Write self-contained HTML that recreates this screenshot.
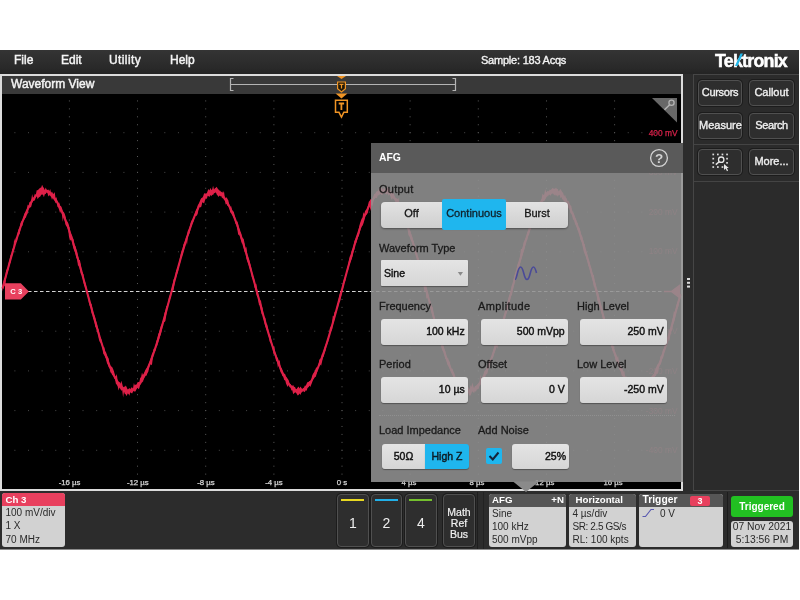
<!DOCTYPE html>
<html><head><meta charset="utf-8"><title>AFG</title>
<style>
*{box-sizing:border-box;margin:0;padding:0}
html,body{width:800px;height:600px;background:#fff;overflow:hidden}
body{font-family:"Liberation Sans",sans-serif;position:relative;color:#fff;filter:contrast(1)}
.a{position:absolute}
#app{left:0;top:50px;width:799px;height:499px;background:#2c2c2c;border-bottom:0;box-shadow:0 1px 0 #8c8c8c}
.menu{top:50px;left:0;width:799px;height:24px;background:linear-gradient(#343434,#2a2a2a 70%,#242424)}
.mi{top:52px;font-size:12px;line-height:16px;color:#f4f4f4;white-space:nowrap;-webkit-text-stroke:.45px #f4f4f4}
.wv{left:0;top:74px;width:683px;height:417px;border:2px solid #dcdcdc;background:#000}
.wvt{left:2px;top:76px;width:679px;height:18px;background:#393939}
.rp{left:693px;top:74px;width:106px;height:417px;border:1px solid #464646;border-right:none;background:#2b2b2b}
.btn{background:#2e2e2e;border:1px solid #505050;border-radius:4px;box-shadow:0 0 0 1px #1c1c1c;color:#f0f0f0;font-size:11px;-webkit-text-stroke:.35px #f0f0f0;text-align:center;white-space:nowrap}
.lbl{color:#1a1a1a;font-size:11px;-webkit-text-stroke:.3px #1a1a1a;line-height:14px;white-space:nowrap}
.inp{background:linear-gradient(#e4e4e4,#d6d6d6);border-radius:3px;color:#111;font-size:10.500px;-webkit-text-stroke:.42px #111;text-align:right;white-space:nowrap;box-shadow:0 1px 1px rgba(0,0,0,.35)}
.badge{background:#d2d2d2;border-radius:3px;color:#2a2a2a;font-size:10px;line-height:13.300px;overflow:hidden;white-space:nowrap}
.bh{height:12.500px;line-height:12.500px;color:#fff;font-weight:bold;font-size:9.700px;padding-left:3.500px;background:#565656}
.bb{padding-left:3.500px;padding-top:0}
.ax{top:477.500px;font-size:7.800px;-webkit-text-stroke:.25px #d8d8d8;color:#d8d8d8;line-height:10px;width:40px;text-align:center;white-space:nowrap}
</style></head><body>
<div class="a" id="app"></div>
<div class="a menu"></div>
<div class="a mi" style="left:14px">File</div>
<div class="a mi" style="left:61px">Edit</div>
<div class="a mi" style="left:109px;letter-spacing:.4px">Utility</div>
<div class="a mi" style="left:170px">Help</div>
<div class="a mi" style="left:481px;font-size:11px;letter-spacing:-.22px;-webkit-text-stroke:.35px #f4f4f4">Sample: 183 Acqs</div>
<div class="a" style="left:715px;top:49.500px;font-size:17.800px;line-height:22px;font-weight:bold;color:#fff;letter-spacing:-0.75px;-webkit-text-stroke:.5px #fff;white-space:nowrap">Tektronix</div>
<svg class="a" style="left:730px;top:50px" width="20" height="22"><path d="M10.5 3.5 L13 3.5 L7.5 16 L5 16Z" fill="#22b8ea"/></svg>

<div class="a wv"></div>
<div class="a wvt"></div>
<div class="a mi" style="left:11px;top:76px">Waveform View</div>

<svg class="a" style="left:0;top:0" width="800" height="600" viewBox="0 0 800 600">
 <g stroke="#484848" stroke-width="1" fill="none"><line x1="14.38" y1="132.7" x2="680" y2="132.7" stroke-dasharray="1 12.63"/><line x1="14.38" y1="172.4" x2="680" y2="172.4" stroke-dasharray="1 12.63"/><line x1="14.38" y1="212.1" x2="680" y2="212.1" stroke-dasharray="1 12.63"/><line x1="14.38" y1="251.8" x2="680" y2="251.8" stroke-dasharray="1 12.63"/><line x1="14.38" y1="291.5" x2="680" y2="291.5" stroke-dasharray="1 12.63"/><line x1="14.38" y1="331.2" x2="680" y2="331.2" stroke-dasharray="1 12.63"/><line x1="14.38" y1="370.9" x2="680" y2="370.9" stroke-dasharray="1 12.63"/><line x1="14.38" y1="410.6" x2="680" y2="410.6" stroke-dasharray="1 12.63"/><line x1="14.38" y1="450.3" x2="680" y2="450.3" stroke-dasharray="1 12.63"/></g><g stroke="#5a5a5a" stroke-width="1" fill="none"><line x1="69.4" y1="100.44" x2="69.4" y2="488" stroke-dasharray="1 6.94"/><line x1="137.5" y1="100.44" x2="137.5" y2="488" stroke-dasharray="1 6.94"/><line x1="205.7" y1="100.44" x2="205.7" y2="488" stroke-dasharray="1 6.94"/><line x1="273.9" y1="100.44" x2="273.9" y2="488" stroke-dasharray="1 6.94"/><line x1="342.0" y1="100.44" x2="342.0" y2="488" stroke-dasharray="1 6.94"/><line x1="410.1" y1="100.44" x2="410.1" y2="488" stroke-dasharray="1 6.94"/><line x1="478.3" y1="100.44" x2="478.3" y2="488" stroke-dasharray="1 6.94"/><line x1="546.5" y1="100.44" x2="546.5" y2="488" stroke-dasharray="1 6.94"/><line x1="614.6" y1="100.44" x2="614.6" y2="488" stroke-dasharray="1 6.94"/></g>
 <line x1="28" y1="291.5" x2="681" y2="291.5" stroke="#d4d4d4" stroke-width="1.200" stroke-dasharray="3.500 2.500"/>
 <g fill="none" stroke="#de2048" stroke-linejoin="round"><path d="M2.5 288.4 L4.5 281.0 L6.5 273.7 L8.5 266.5 L10.5 259.4 L12.5 252.5 L14.5 245.7 L16.5 239.3 L18.5 233.1 L20.5 227.2 L22.5 221.7 L24.5 216.6 L26.5 211.8 L28.5 207.5 L30.5 203.7 L32.5 200.3 L34.5 197.5 L36.5 195.1 L38.5 193.3 L40.5 192.0 L42.5 191.2 L44.5 191.0 L46.5 191.3 L48.5 192.2 L50.5 193.6 L52.5 195.6 L54.5 198.1 L56.5 201.0 L58.5 204.5 L60.5 208.5 L62.5 212.9 L64.5 217.7 L66.5 222.9 L68.5 228.5 L70.5 234.5 L72.5 240.7 L74.5 247.2 L76.5 254.0 L78.5 261.0 L80.5 268.1 L82.5 275.3 L84.5 282.7 L86.5 290.1 L88.5 297.5 L90.5 304.8 L92.5 312.1 L94.5 319.3 L96.5 326.3 L98.5 333.1 L100.5 339.7 L102.5 346.0 L104.5 352.0 L106.5 357.7 L108.5 363.0 L110.5 368.0 L112.5 372.5 L114.5 376.5 L116.5 380.1 L118.5 383.2 L120.5 385.8 L122.5 387.9 L124.5 389.5 L126.5 390.5 L128.5 391.0 L130.5 390.9 L132.5 390.3 L134.5 389.1 L136.5 387.4 L138.5 385.2 L140.5 382.4 L142.5 379.2 L144.5 375.5 L146.5 371.3 L148.5 366.7 L150.5 361.6 L152.5 356.2 L154.5 350.4 L156.5 344.3 L158.5 337.9 L160.5 331.2 L162.5 324.4 L164.5 317.3 L166.5 310.1 L168.5 302.8 L170.5 295.4 L172.5 288.0 L174.5 280.7 L176.5 273.3 L178.5 266.1 L180.5 259.0 L182.5 252.1 L184.5 245.4 L186.5 239.0 L188.5 232.8 L190.5 226.9 L192.5 221.4 L194.5 216.3 L196.5 211.6 L198.5 207.3 L200.5 203.5 L202.5 200.2 L204.5 197.3 L206.5 195.0 L208.5 193.2 L210.5 191.9 L212.5 191.2 L214.5 191.0 L216.5 191.4 L218.5 192.3 L220.5 193.7 L222.5 195.7 L224.5 198.2 L226.5 201.2 L228.5 204.7 L230.5 208.7 L232.5 213.1 L234.5 217.9 L236.5 223.2 L238.5 228.8 L240.5 234.8 L242.5 241.0 L244.5 247.6 L246.5 254.3 L248.5 261.3 L250.5 268.5 L252.5 275.7 L254.5 283.1 L256.5 290.4 L258.5 297.8 L260.5 305.2 L262.5 312.5 L264.5 319.6 L266.5 326.6 L268.5 333.4 L270.5 340.0 L272.5 346.3 L274.5 352.3 L276.5 358.0 L278.5 363.3 L280.5 368.2 L282.5 372.7 L284.5 376.7 L286.5 380.3 L288.5 383.4 L290.5 386.0 L292.5 388.0 L294.5 389.5 L296.5 390.5 L298.5 391.0 L300.5 390.9 L302.5 390.2 L304.5 389.0 L306.5 387.3 L308.5 385.0 L310.5 382.3 L312.5 379.0 L314.5 375.3 L316.5 371.1 L318.5 366.4 L320.5 361.4 L322.5 355.9 L324.5 350.1 L326.5 344.0 L328.5 337.6 L330.5 330.9 L332.5 324.0 L334.5 317.0 L336.5 309.7 L338.5 302.4 L340.5 295.1 L342.5 287.7 L344.5 280.3 L346.5 273.0 L348.5 265.8 L350.5 258.7 L352.5 251.8 L354.5 245.1 L356.5 238.6 L358.5 232.5 L360.5 226.7 L362.5 221.2 L364.5 216.1 L366.5 211.4 L368.5 207.1 L370.5 203.3 L372.5 200.0 L374.5 197.2 L376.5 194.9 L378.5 193.1 L380.5 191.9 L382.5 191.2 L384.5 191.0 L386.5 191.4 L388.5 192.3 L390.5 193.8 L392.5 195.8 L394.5 198.3 L396.5 201.4 L398.5 204.9 L400.5 208.9 L402.5 213.3 L404.5 218.2 L406.5 223.5 L408.5 229.1 L410.5 235.1 L412.5 241.3 L414.5 247.9 L416.5 254.7 L418.5 261.7 L420.5 268.8 L422.5 276.1 L424.5 283.4 L426.5 290.8 L428.5 298.2 L430.5 305.6 L432.5 312.8 L434.5 320.0 L436.5 327.0 L438.5 333.8 L440.5 340.3 L442.5 346.6 L444.5 352.6 L446.5 358.3 L448.5 363.5 L450.5 368.4 L452.5 372.9 L454.5 376.9 L456.5 380.5 L458.5 383.5 L460.5 386.1 L462.5 388.1 L464.5 389.6 L466.5 390.6 L468.5 391.0 L470.5 390.9 L472.5 390.2 L474.5 389.0 L476.5 387.2 L478.5 384.9 L480.5 382.1 L482.5 378.8 L484.5 375.1 L486.5 370.8 L488.5 366.2 L490.5 361.1 L492.5 355.6 L494.5 349.8 L496.5 343.7 L498.5 337.2 L500.5 330.6 L502.5 323.7 L504.5 316.6 L506.5 309.4 L508.5 302.1 L510.5 294.7 L512.5 287.3 L514.5 279.9 L516.5 272.6 L518.5 265.4 L520.5 258.3 L522.5 251.4 L524.5 244.8 L526.5 238.3 L528.5 232.2 L530.5 226.4 L532.5 220.9 L534.5 215.8 L536.5 211.2 L538.5 206.9 L540.5 203.2 L542.5 199.9 L544.5 197.1 L546.5 194.8 L548.5 193.0 L550.5 191.8 L552.5 191.1 L554.5 191.0 L556.5 191.4 L558.5 192.4 L560.5 193.9 L562.5 195.9 L564.5 198.5 L566.5 201.5 L568.5 205.1 L570.5 209.1 L572.5 213.6 L574.5 218.5 L576.5 223.7 L578.5 229.4 L580.5 235.4 L582.5 241.7 L584.5 248.2 L586.5 255.0 L588.5 262.0 L590.5 269.2 L592.5 276.4 L594.5 283.8 L596.5 291.2 L598.5 298.6 L600.5 305.9 L602.5 313.2 L604.5 320.3 L606.5 327.3 L608.5 334.1 L610.5 340.7 L612.5 346.9 L614.5 352.9 L616.5 358.5 L618.5 363.8 L620.5 368.7 L622.5 373.1 L624.5 377.1 L626.5 380.6 L628.5 383.7 L630.5 386.2 L632.5 388.2 L634.5 389.7 L636.5 390.6 L638.5 391.0 L640.5 390.8 L642.5 390.1 L644.5 388.9 L646.5 387.1 L648.5 384.8 L650.5 382.0 L652.5 378.7 L654.5 374.9 L656.5 370.6 L658.5 365.9 L660.5 360.8 L662.5 355.3 L664.5 349.5 L666.5 343.4 L668.5 336.9 L670.5 330.2 L672.5 323.3 L674.5 316.2 L676.5 309.0 L678.5 301.7 L680.5 294.3" stroke-width="2.100"/><path d="M2.5 285.8 L3.4 282.3 L4.3 278.4 L5.2 277.3 L6.1 270.5 L7.0 269.0 L7.9 267.7 L8.8 262.5 L9.7 259.6 L10.6 254.9 L11.5 253.9 L12.4 248.6 L13.3 248.9 L14.2 238.6 L15.1 241.9 L16.0 237.0 L16.9 237.0 L17.8 232.6 L18.7 229.1 L19.6 227.9 L20.5 222.9 L21.4 221.3 L22.3 220.4 L23.2 218.8 L24.1 214.4 L25.0 212.6 L25.9 211.8 L26.8 209.6 L27.7 204.6 L28.6 206.1 L29.5 201.9 L30.4 201.9 L31.3 199.3 L32.2 194.0 L33.1 198.4 L34.0 196.8 L34.9 193.5 L35.8 194.9 L36.7 190.2 L37.6 190.3 L38.5 189.5 L39.4 188.6 L40.3 187.7 L41.2 187.4 L42.1 184.8 L43.0 186.8 L43.9 187.9 L44.8 190.1 L45.7 187.5 L46.6 189.5 L47.5 190.1 L48.4 189.6 L49.3 191.1 L50.2 189.1 L51.1 192.8 L52.0 191.4 L52.9 193.4 L53.8 193.8 L54.7 192.0 L55.6 198.7 L56.5 197.1 L57.4 201.7 L58.3 203.2 L59.2 202.4 L60.1 206.0 L61.0 205.9 L61.9 207.9 L62.8 211.2 L63.7 212.0 L64.6 213.5 L65.5 216.3 L66.4 221.0 L67.3 221.4 L68.2 222.9 L69.1 225.8 L70.0 229.9 L70.9 234.6 L71.8 234.5 L72.7 237.7 L73.6 239.3 L74.5 245.3 L75.4 246.1 L76.3 249.1 L77.2 251.7 L78.1 256.6 L79.0 259.9 L79.9 260.1 L80.8 264.5 L81.7 271.1 L82.6 273.0 L83.5 274.5 L84.4 280.6 L85.3 282.4 L86.2 286.1 L87.1 289.7 L88.0 294.2 L88.9 296.0 L89.8 300.5 L90.7 303.5 L91.6 304.0 L92.5 308.4 L93.4 312.9 L94.3 315.0 L95.2 317.3 L96.1 321.1 L97.0 323.8 L97.9 328.0 L98.8 329.9 L99.7 336.0 L100.6 337.9 L101.5 339.7 L102.4 344.2 L103.3 346.9 L104.2 347.1 L105.1 351.4 L106.0 352.3 L106.9 354.9 L107.8 356.9 L108.7 358.6 L109.6 365.0 L110.5 366.2 L111.4 366.6 L112.3 367.2 L113.2 369.2 L114.1 371.8 L115.0 376.3 L115.9 376.3 L116.8 374.0 L117.7 381.1 L118.6 381.9 L119.5 382.1 L120.4 383.8 L121.3 380.8 L122.2 383.8 L123.1 387.4 L124.0 386.6 L124.9 386.8 L125.8 385.5 L126.7 387.3 L127.6 389.5 L128.5 389.1 L129.4 388.1 L130.3 389.2 L131.2 387.4 L132.1 387.4 L133.0 388.5 L133.9 382.9 L134.8 385.6 L135.7 384.6 L136.6 384.6 L137.5 382.2 L138.4 382.0 L139.3 382.3 L140.2 378.1 L141.1 377.0 L142.0 372.6 L142.9 374.9 L143.8 373.4 L144.7 371.5 L145.6 369.5 L146.5 368.2 L147.4 366.7 L148.3 364.7 L149.2 362.7 L150.1 360.3 L151.0 357.3 L151.9 354.0 L152.8 352.4 L153.7 348.7 L154.6 349.0 L155.5 346.3 L156.4 341.2 L157.3 338.9 L158.2 334.2 L159.1 332.2 L160.0 328.8 L160.9 325.8 L161.8 323.9 L162.7 321.2 L163.6 318.2 L164.5 312.9 L165.4 310.7 L166.3 305.9 L167.2 305.9 L168.1 302.6 L169.0 297.1 L169.9 294.9 L170.8 292.2 L171.7 289.3 L172.6 285.3 L173.5 279.6 L174.4 278.7 L175.3 276.3 L176.2 270.2 L177.1 269.3 L178.0 267.1 L178.9 263.6 L179.8 258.8 L180.7 254.1 L181.6 250.7 L182.5 249.1 L183.4 244.6 L184.3 242.4 L185.2 240.7 L186.1 236.8 L187.0 235.6 L187.9 230.6 L188.8 229.6 L189.7 226.9 L190.6 222.9 L191.5 220.5 L192.4 220.3 L193.3 217.8 L194.2 215.9 L195.1 212.4 L196.0 209.9 L196.9 208.4 L197.8 205.2 L198.7 203.7 L199.6 201.8 L200.5 199.6 L201.4 198.1 L202.3 197.7 L203.2 196.3 L204.1 193.3 L205.0 193.6 L205.9 193.4 L206.8 193.4 L207.7 190.8 L208.6 189.0 L209.5 190.5 L210.4 187.8 L211.3 190.0 L212.2 189.2 L213.1 185.8 L214.0 189.6 L214.9 188.2 L215.8 187.8 L216.7 186.8 L217.6 188.5 L218.5 189.5 L219.4 190.4 L220.3 190.7 L221.2 192.3 L222.1 191.5 L223.0 193.1 L223.9 191.0 L224.8 196.9 L225.7 198.9 L226.6 197.1 L227.5 199.1 L228.4 200.6 L229.3 205.4 L230.2 207.0 L231.1 206.1 L232.0 209.9 L232.9 211.3 L233.8 211.8 L234.7 215.8 L235.6 219.2 L236.5 222.2 L237.4 221.3 L238.3 224.6 L239.2 228.8 L240.1 231.8 L241.0 232.9 L241.9 237.1 L242.8 238.6 L243.7 238.7 L244.6 243.7 L245.5 249.1 L246.4 246.7 L247.3 254.8 L248.2 257.2 L249.1 259.5 L250.0 263.1 L250.9 266.0 L251.8 270.6 L252.7 274.7 L253.6 276.9 L254.5 280.0 L255.4 285.5 L256.3 283.6 L257.2 290.1 L258.1 294.3 L259.0 296.8 L259.9 301.5 L260.8 299.4 L261.7 304.9 L262.6 308.1 L263.5 315.1 L264.4 316.9 L265.3 317.7 L266.2 323.8 L267.1 324.2 L268.0 328.5 L268.9 333.7 L269.8 334.6 L270.7 336.5 L271.6 341.3 L272.5 344.7 L273.4 346.5 L274.3 346.5 L275.2 352.4 L276.1 354.5 L277.0 357.1 L277.9 357.9 L278.8 361.7 L279.7 359.7 L280.6 367.5 L281.5 368.0 L282.4 370.6 L283.3 372.7 L284.2 373.8 L285.1 374.1 L286.0 376.4 L286.9 377.5 L287.8 378.9 L288.7 380.3 L289.6 383.8 L290.5 384.0 L291.4 385.5 L292.3 385.7 L293.2 385.0 L294.1 387.0 L295.0 386.7 L295.9 389.4 L296.8 388.8 L297.7 387.6 L298.6 386.4 L299.5 388.5 L300.4 386.6 L301.3 387.8 L302.2 389.0 L303.1 388.2 L304.0 387.6 L304.9 385.4 L305.8 385.8 L306.7 383.4 L307.6 382.0 L308.5 382.0 L309.4 380.9 L310.3 381.1 L311.2 380.0 L312.1 375.8 L313.0 373.8 L313.9 372.5 L314.8 371.0 L315.7 368.6 L316.6 367.2 L317.5 367.5 L318.4 365.1 L319.3 359.8 L320.2 358.8 L321.1 358.8 L322.0 353.6 L322.9 353.9 L323.8 350.1 L324.7 347.1 L325.6 344.4 L326.5 342.6 L327.4 339.3 L328.3 337.3 L329.2 333.4 L330.1 326.2 L331.0 328.1 L331.9 324.5 L332.8 315.8 L333.7 316.5 L334.6 311.8 L335.5 311.9 L336.4 309.0 L337.3 304.0 L338.2 302.7 L339.1 296.5 L340.0 293.0 L340.9 291.2 L341.8 289.4 L342.7 284.7 L343.6 280.3 L344.5 278.2 L345.4 275.3 L346.3 272.2 L347.2 267.9 L348.1 265.1 L349.0 259.7 L349.9 256.0 L350.8 255.2 L351.7 251.0 L352.6 249.2 L353.5 246.1 L354.4 241.1 L355.3 239.4 L356.2 237.0 L357.1 235.0 L358.0 233.1 L358.9 228.1 L359.8 223.9 L360.7 221.3 L361.6 218.8 L362.5 217.8 L363.4 211.9 L364.3 214.8 L365.2 210.1 L366.1 211.2 L367.0 208.5 L367.9 205.4 L368.8 201.7 L369.7 200.7 L370.6 199.0 L371.5 200.0 L372.4 198.6 L373.3 196.8 L374.2 194.0 L375.1 193.8 L376.0 192.2 L376.9 190.9 L377.8 191.2 L378.7 188.9 L379.6 187.8 L380.5 188.8 L381.4 187.3 L382.3 188.9 L383.2 190.0 L384.1 186.4 L385.0 189.3 L385.9 189.4 L386.8 187.3 L387.7 187.5 L388.6 188.7 L389.5 188.4 L390.4 191.5 L391.3 191.3 L392.2 193.1 L393.1 191.7 L394.0 194.2 L394.9 196.6 L395.8 199.1 L396.7 197.9 L397.6 199.3 L398.5 197.8 L399.4 203.7 L400.3 205.6 L401.2 209.2 L402.1 208.5 L403.0 211.5 L403.9 212.5 L404.8 216.5 L405.7 218.9 L406.6 220.0 L407.5 225.3 L408.4 222.7 L409.3 230.2 L410.2 230.7 L411.1 234.1 L412.0 236.0 L412.9 239.9 L413.8 241.5 L414.7 246.2 L415.6 249.5 L416.5 251.9 L417.4 257.0 L418.3 257.8 L419.2 261.0 L420.1 263.6 L421.0 268.7 L421.9 271.5 L422.8 273.1 L423.7 272.7 L424.6 280.8 L425.5 279.6 L426.4 286.9 L427.3 291.2 L428.2 294.6 L429.1 299.3 L430.0 300.7 L430.9 302.4 L431.8 307.8 L432.7 306.5 L433.6 313.3 L434.5 317.6 L435.4 321.7 L436.3 324.8 L437.2 327.0 L438.1 329.3 L439.0 331.8 L439.9 331.3 L440.8 337.6 L441.7 339.4 L442.6 345.2 L443.5 345.5 L444.4 349.3 L445.3 351.1 L446.2 355.8 L447.1 358.6 L448.0 357.8 L448.9 360.9 L449.8 361.8 L450.7 366.9 L451.6 369.1 L452.5 368.6 L453.4 371.5 L454.3 373.1 L455.2 377.2 L456.1 378.1 L457.0 376.7 L457.9 380.9 L458.8 380.5 L459.7 382.1 L460.6 381.9 L461.5 384.1 L462.4 381.0 L463.3 385.9 L464.2 385.8 L465.1 386.9 L466.0 388.4 L466.9 386.0 L467.8 386.4 L468.7 387.4 L469.6 389.8 L470.5 385.0 L471.4 387.1 L472.3 382.4 L473.2 385.7 L474.1 388.4 L475.0 385.7 L475.9 386.0 L476.8 385.1 L477.7 384.1 L478.6 383.0 L479.5 381.6 L480.4 374.5 L481.3 379.2 L482.2 377.1 L483.1 376.4 L484.0 372.1 L484.9 370.5 L485.8 370.0 L486.7 368.8 L487.6 366.2 L488.5 361.6 L489.4 359.6 L490.3 359.3 L491.2 358.1 L492.1 355.2 L493.0 351.1 L493.9 348.0 L494.8 344.4 L495.7 343.1 L496.6 340.7 L497.5 338.9 L498.4 335.2 L499.3 328.7 L500.2 328.8 L501.1 325.4 L502.0 323.1 L502.9 320.0 L503.8 316.1 L504.7 314.1 L505.6 311.2 L506.5 307.9 L507.4 304.7 L508.3 299.3 L509.2 295.0 L510.1 294.3 L511.0 291.7 L511.9 284.8 L512.8 284.5 L513.7 278.5 L514.6 275.0 L515.5 272.1 L516.4 271.3 L517.3 265.2 L518.2 262.4 L519.1 261.2 L520.0 257.9 L520.9 248.9 L521.8 249.1 L522.7 247.2 L523.6 242.3 L524.5 240.8 L525.4 238.5 L526.3 238.1 L527.2 232.7 L528.1 231.3 L529.0 227.2 L529.9 223.6 L530.8 220.9 L531.7 216.1 L532.6 218.0 L533.5 215.2 L534.4 213.9 L535.3 211.5 L536.2 207.2 L537.1 206.0 L538.0 203.5 L538.9 203.2 L539.8 201.4 L540.7 200.7 L541.6 198.7 L542.5 193.5 L543.4 195.0 L544.3 194.2 L545.2 189.1 L546.1 192.5 L547.0 191.6 L547.9 190.8 L548.8 191.5 L549.7 189.4 L550.6 189.9 L551.5 189.2 L552.4 187.9 L553.3 188.4 L554.2 188.7 L555.1 188.7 L556.0 187.6 L556.9 189.0 L557.8 189.0 L558.7 191.7 L559.6 189.9 L560.5 189.1 L561.4 190.6 L562.3 191.9 L563.2 193.1 L564.1 196.6 L565.0 194.6 L565.9 197.8 L566.8 198.6 L567.7 202.2 L568.6 200.5 L569.5 203.2 L570.4 205.3 L571.3 206.0 L572.2 211.5 L573.1 213.2 L574.0 213.4 L574.9 218.6 L575.8 218.2 L576.7 222.6 L577.6 222.8 L578.5 227.7 L579.4 227.4 L580.3 230.7 L581.2 235.3 L582.1 236.1 L583.0 239.6 L583.9 243.3 L584.8 244.5 L585.7 251.4 L586.6 251.9 L587.5 256.5 L588.4 259.9 L589.3 261.7 L590.2 265.4 L591.1 267.5 L592.0 271.8 L592.9 275.2 L593.8 274.4 L594.7 281.3 L595.6 283.7 L596.5 288.6 L597.4 289.7 L598.3 293.2 L599.2 296.9 L600.1 303.6 L601.0 306.5 L601.9 307.2 L602.8 311.6 L603.7 314.9 L604.6 317.4 L605.5 322.2 L606.4 322.3 L607.3 328.2 L608.2 332.1 L609.1 334.5 L610.0 334.4 L610.9 340.4 L611.8 343.8 L612.7 345.7 L613.6 345.6 L614.5 349.4 L615.4 353.5 L616.3 354.5 L617.2 357.7 L618.1 355.4 L619.0 362.9 L619.9 365.7 L620.8 366.3 L621.7 368.2 L622.6 369.1 L623.5 371.5 L624.4 371.3 L625.3 377.4 L626.2 375.7 L627.1 380.0 L628.0 381.5 L628.9 382.8 L629.8 382.7 L630.7 384.3 L631.6 385.0 L632.5 385.9 L633.4 384.5 L634.3 385.7 L635.2 388.5 L636.1 389.2 L637.0 388.5 L637.9 387.8 L638.8 387.6 L639.7 387.9 L640.6 388.9 L641.5 388.0 L642.4 387.9 L643.3 388.1 L644.2 388.3 L645.1 385.1 L646.0 384.9 L646.9 384.2 L647.8 381.9 L648.7 380.6 L649.6 381.9 L650.5 378.3 L651.4 376.6 L652.3 375.5 L653.2 373.9 L654.1 374.6 L655.0 369.7 L655.9 368.2 L656.8 365.7 L657.7 364.0 L658.6 363.8 L659.5 362.4 L660.4 356.3 L661.3 355.9 L662.2 353.5 L663.1 348.8 L664.0 349.6 L664.9 344.4 L665.8 337.0 L666.7 341.4 L667.6 338.8 L668.5 333.7 L669.4 332.6 L670.3 328.2 L671.2 326.9 L672.1 320.3 L673.0 317.0 L673.9 311.0 L674.8 312.2 L675.7 308.9 L676.6 304.8 L677.5 301.7 L678.4 300.6 L679.3 296.5 L680.2 292.2 L680.2 296.8 L679.3 301.0 L678.4 306.2 L677.5 308.0 L676.6 310.8 L675.7 314.0 L674.8 319.8 L673.9 322.4 L673.0 324.8 L672.1 330.6 L671.2 331.0 L670.3 335.3 L669.4 341.3 L668.5 337.9 L667.6 343.3 L666.7 344.1 L665.8 347.2 L664.9 350.9 L664.0 352.4 L663.1 358.1 L662.2 358.6 L661.3 362.7 L660.4 365.1 L659.5 364.7 L658.6 368.9 L657.7 374.1 L656.8 373.4 L655.9 376.3 L655.0 376.0 L654.1 378.6 L653.2 382.7 L652.3 382.0 L651.4 381.7 L650.5 385.1 L649.6 384.2 L648.7 389.2 L647.8 388.3 L646.9 388.8 L646.0 391.3 L645.1 389.5 L644.2 391.2 L643.3 394.2 L642.4 393.8 L641.5 394.8 L640.6 392.9 L639.7 395.7 L638.8 395.6 L637.9 395.3 L637.0 394.0 L636.1 395.2 L635.2 392.4 L634.3 393.5 L633.4 389.9 L632.5 391.8 L631.6 390.3 L630.7 387.2 L629.8 386.3 L628.9 387.3 L628.0 384.4 L627.1 382.8 L626.2 381.1 L625.3 379.6 L624.4 377.9 L623.5 376.2 L622.6 376.6 L621.7 375.6 L620.8 371.1 L619.9 370.1 L619.0 366.5 L618.1 363.8 L617.2 361.5 L616.3 361.3 L615.4 359.7 L614.5 354.0 L613.6 352.0 L612.7 351.2 L611.8 347.8 L610.9 345.3 L610.0 341.1 L609.1 337.0 L608.2 334.0 L607.3 334.1 L606.4 330.0 L605.5 324.9 L604.6 321.6 L603.7 320.5 L602.8 318.7 L601.9 314.2 L601.0 310.8 L600.1 305.9 L599.2 308.5 L598.3 300.8 L597.4 301.2 L596.5 293.6 L595.6 291.4 L594.7 286.5 L593.8 286.8 L592.9 280.8 L592.0 277.1 L591.1 274.6 L590.2 270.9 L589.3 266.7 L588.4 266.1 L587.5 261.5 L586.6 259.0 L585.7 255.9 L584.8 254.2 L583.9 251.9 L583.0 248.3 L582.1 242.1 L581.2 241.2 L580.3 239.2 L579.4 234.2 L578.5 231.1 L577.6 229.9 L576.7 227.0 L575.8 225.4 L574.9 223.6 L574.0 219.0 L573.1 220.4 L572.2 214.9 L571.3 213.8 L570.4 213.0 L569.5 208.1 L568.6 208.4 L567.7 206.8 L566.8 204.0 L565.9 202.0 L565.0 201.1 L564.1 201.9 L563.2 199.8 L562.3 199.5 L561.4 197.1 L560.5 198.3 L559.6 194.8 L558.7 195.0 L557.8 196.7 L556.9 195.0 L556.0 195.9 L555.1 194.6 L554.2 195.4 L553.3 193.7 L552.4 193.6 L551.5 194.0 L550.6 195.7 L549.7 194.7 L548.8 194.8 L547.9 196.7 L547.0 195.5 L546.1 197.9 L545.2 199.5 L544.3 201.1 L543.4 201.1 L542.5 204.2 L541.6 203.8 L540.7 206.7 L539.8 206.3 L538.9 209.7 L538.0 209.8 L537.1 212.9 L536.2 213.1 L535.3 216.3 L534.4 219.0 L533.5 221.7 L532.6 224.4 L531.7 225.8 L530.8 229.4 L529.9 230.0 L529.0 235.3 L528.1 235.3 L527.2 240.0 L526.3 240.4 L525.4 244.6 L524.5 249.0 L523.6 251.4 L522.7 254.6 L521.8 258.1 L520.9 260.3 L520.0 264.0 L519.1 268.1 L518.2 270.5 L517.3 273.3 L516.4 277.1 L515.5 279.1 L514.6 282.3 L513.7 285.7 L512.8 290.3 L511.9 295.3 L511.0 295.6 L510.1 299.3 L509.2 305.3 L508.3 305.0 L507.4 310.7 L506.5 313.1 L505.6 315.5 L504.7 320.4 L503.8 321.7 L502.9 326.6 L502.0 328.1 L501.1 330.5 L500.2 335.0 L499.3 336.2 L498.4 338.6 L497.5 348.9 L496.6 346.6 L495.7 348.1 L494.8 351.7 L493.9 353.3 L493.0 358.1 L492.1 358.0 L491.2 363.2 L490.3 362.9 L489.4 367.6 L488.5 367.7 L487.6 372.8 L486.7 374.7 L485.8 373.4 L484.9 380.0 L484.0 378.4 L483.1 381.7 L482.2 383.8 L481.3 383.3 L480.4 385.2 L479.5 385.7 L478.6 389.1 L477.7 389.3 L476.8 389.6 L475.9 392.1 L475.0 390.7 L474.1 393.1 L473.2 392.2 L472.3 391.1 L471.4 393.5 L470.5 395.5 L469.6 395.7 L468.7 394.2 L467.8 391.8 L466.9 395.3 L466.0 392.5 L465.1 394.6 L464.2 394.8 L463.3 391.0 L462.4 390.9 L461.5 391.9 L460.6 388.8 L459.7 386.4 L458.8 385.0 L457.9 387.3 L457.0 384.1 L456.1 382.4 L455.2 382.8 L454.3 381.0 L453.4 377.7 L452.5 374.3 L451.6 372.9 L450.7 370.7 L449.8 368.6 L448.9 366.5 L448.0 365.8 L447.1 363.7 L446.2 359.0 L445.3 358.9 L444.4 354.5 L443.5 350.6 L442.6 350.7 L441.7 348.6 L440.8 343.8 L439.9 340.2 L439.0 337.2 L438.1 335.1 L437.2 332.5 L436.3 328.5 L435.4 326.3 L434.5 323.9 L433.6 321.3 L432.7 316.2 L431.8 313.2 L430.9 310.1 L430.0 305.0 L429.1 301.7 L428.2 298.4 L427.3 297.6 L426.4 299.0 L425.5 290.2 L424.6 292.6 L423.7 287.2 L422.8 279.3 L421.9 280.3 L421.0 274.6 L420.1 268.4 L419.2 266.2 L418.3 263.2 L417.4 261.0 L416.5 255.5 L415.6 254.3 L414.7 250.3 L413.8 249.7 L412.9 244.9 L412.0 241.6 L411.1 241.3 L410.2 238.5 L409.3 235.9 L408.4 235.3 L407.5 227.5 L406.6 227.4 L405.7 222.2 L404.8 222.2 L403.9 218.1 L403.0 217.1 L402.1 214.9 L401.2 213.2 L400.3 209.8 L399.4 207.9 L398.5 209.3 L397.6 208.6 L396.7 203.5 L395.8 201.7 L394.9 200.3 L394.0 199.3 L393.1 197.6 L392.2 199.6 L391.3 199.2 L390.4 196.4 L389.5 193.9 L388.6 195.9 L387.7 193.1 L386.8 194.7 L385.9 193.7 L385.0 193.5 L384.1 193.0 L383.2 193.5 L382.3 195.0 L381.4 195.0 L380.5 193.8 L379.6 194.6 L378.7 195.4 L377.8 195.1 L376.9 198.2 L376.0 197.7 L375.1 197.8 L374.2 199.1 L373.3 202.2 L372.4 206.2 L371.5 204.9 L370.6 210.9 L369.7 206.1 L368.8 207.7 L367.9 212.8 L367.0 214.3 L366.1 215.3 L365.2 216.0 L364.3 220.6 L363.4 223.6 L362.5 225.7 L361.6 226.4 L360.7 228.5 L359.8 232.4 L358.9 235.8 L358.0 237.3 L357.1 240.0 L356.2 243.1 L355.3 243.7 L354.4 249.6 L353.5 251.8 L352.6 256.2 L351.7 259.1 L350.8 261.3 L349.9 263.3 L349.0 266.1 L348.1 270.1 L347.2 271.3 L346.3 274.9 L345.4 280.8 L344.5 281.5 L343.6 285.8 L342.7 290.4 L341.8 293.4 L340.9 297.2 L340.0 301.7 L339.1 302.6 L338.2 306.4 L337.3 307.7 L336.4 312.3 L335.5 314.3 L334.6 319.2 L333.7 321.7 L332.8 325.4 L331.9 330.4 L331.0 330.7 L330.1 333.3 L329.2 337.0 L328.3 341.3 L327.4 343.9 L326.5 345.5 L325.6 350.4 L324.7 352.8 L323.8 356.2 L322.9 357.7 L322.0 362.1 L321.1 365.8 L320.2 364.5 L319.3 365.8 L318.4 367.5 L317.5 371.1 L316.6 374.1 L315.7 376.9 L314.8 376.8 L313.9 378.8 L313.0 379.1 L312.1 382.4 L311.2 384.8 L310.3 387.1 L309.4 385.6 L308.5 387.3 L307.6 387.6 L306.7 390.7 L305.8 390.2 L304.9 391.8 L304.0 392.2 L303.1 390.7 L302.2 391.9 L301.3 392.7 L300.4 395.1 L299.5 393.5 L298.6 394.9 L297.7 395.5 L296.8 394.1 L295.9 392.5 L295.0 392.5 L294.1 393.3 L293.2 394.3 L292.3 390.3 L291.4 390.4 L290.5 387.4 L289.6 387.2 L288.7 384.8 L287.8 387.0 L286.9 385.4 L286.0 383.5 L285.1 379.5 L284.2 380.4 L283.3 376.3 L282.4 376.2 L281.5 373.5 L280.6 372.3 L279.7 369.2 L278.8 365.2 L277.9 367.9 L277.0 360.8 L276.1 361.4 L275.2 355.2 L274.3 354.1 L273.4 353.8 L272.5 348.0 L271.6 345.0 L270.7 343.0 L269.8 342.1 L268.9 336.9 L268.0 332.7 L267.1 330.9 L266.2 328.6 L265.3 326.3 L264.4 322.9 L263.5 317.8 L262.6 314.2 L261.7 314.2 L260.8 310.2 L259.9 304.8 L259.0 305.5 L258.1 297.3 L257.2 297.0 L256.3 293.7 L255.4 289.2 L254.5 287.3 L253.6 280.7 L252.7 279.2 L251.8 277.1 L250.9 271.4 L250.0 269.5 L249.1 266.3 L248.2 263.6 L247.3 261.6 L246.4 258.7 L245.5 252.8 L244.6 251.9 L243.7 247.8 L242.8 243.2 L241.9 243.6 L241.0 240.6 L240.1 237.0 L239.2 234.5 L238.3 234.9 L237.4 230.0 L236.5 224.4 L235.6 224.1 L234.7 219.9 L233.8 217.8 L232.9 215.7 L232.0 214.7 L231.1 213.1 L230.2 212.4 L229.3 208.0 L228.4 205.8 L227.5 206.0 L226.6 203.9 L225.7 204.4 L224.8 200.6 L223.9 199.8 L223.0 197.4 L222.1 198.5 L221.2 195.4 L220.3 196.5 L219.4 195.4 L218.5 197.1 L217.6 195.4 L216.7 194.6 L215.8 192.1 L214.9 192.9 L214.0 193.3 L213.1 195.1 L212.2 194.8 L211.3 196.3 L210.4 195.1 L209.5 196.9 L208.6 196.3 L207.7 195.7 L206.8 199.1 L205.9 198.3 L205.0 200.3 L204.1 203.4 L203.2 202.8 L202.3 201.9 L201.4 206.4 L200.5 207.6 L199.6 206.4 L198.7 207.8 L197.8 213.5 L196.9 215.6 L196.0 216.1 L195.1 216.0 L194.2 218.8 L193.3 221.8 L192.4 222.9 L191.5 226.3 L190.6 228.8 L189.7 232.7 L188.8 234.9 L187.9 236.2 L187.0 244.9 L186.1 241.1 L185.2 245.8 L184.3 248.3 L183.4 251.1 L182.5 255.0 L181.6 256.4 L180.7 260.3 L179.8 264.2 L178.9 266.6 L178.0 272.0 L177.1 274.1 L176.2 277.3 L175.3 279.2 L174.4 285.0 L173.5 290.7 L172.6 290.6 L171.7 292.0 L170.8 297.3 L169.9 299.5 L169.0 303.0 L168.1 305.8 L167.2 309.3 L166.3 315.3 L165.4 320.9 L164.5 322.0 L163.6 322.0 L162.7 325.1 L161.8 330.4 L160.9 334.2 L160.0 336.4 L159.1 339.6 L158.2 342.4 L157.3 345.6 L156.4 346.4 L155.5 350.7 L154.6 351.2 L153.7 353.8 L152.8 358.4 L151.9 365.2 L151.0 364.4 L150.1 364.2 L149.2 367.2 L148.3 371.7 L147.4 373.3 L146.5 375.8 L145.6 375.5 L144.7 377.0 L143.8 377.9 L142.9 382.6 L142.0 381.2 L141.1 384.0 L140.2 385.0 L139.3 388.2 L138.4 389.2 L137.5 387.5 L136.6 388.9 L135.7 391.1 L134.8 391.9 L133.9 390.5 L133.0 391.8 L132.1 393.6 L131.2 393.0 L130.3 392.2 L129.4 395.8 L128.5 394.1 L127.6 393.4 L126.7 396.3 L125.8 394.3 L124.9 394.3 L124.0 391.8 L123.1 397.4 L122.2 390.0 L121.3 390.7 L120.4 389.1 L119.5 387.5 L118.6 390.5 L117.7 386.6 L116.8 384.7 L115.9 383.8 L115.0 379.3 L114.1 378.2 L113.2 374.8 L112.3 375.4 L111.4 373.1 L110.5 372.5 L109.6 368.0 L108.7 367.2 L107.8 364.8 L106.9 362.9 L106.0 358.2 L105.1 357.0 L104.2 354.8 L103.3 354.1 L102.4 348.3 L101.5 343.7 L100.6 342.7 L99.7 341.7 L98.8 338.9 L97.9 332.5 L97.0 329.2 L96.1 327.7 L95.2 326.4 L94.3 319.4 L93.4 319.3 L92.5 313.9 L91.6 313.2 L90.7 307.6 L89.8 306.0 L88.9 303.1 L88.0 297.2 L87.1 294.6 L86.2 290.8 L85.3 286.9 L84.4 285.9 L83.5 282.4 L82.6 277.8 L81.7 275.0 L80.8 273.7 L79.9 269.5 L79.0 265.1 L78.1 266.8 L77.2 259.3 L76.3 257.7 L75.4 253.3 L74.5 250.9 L73.6 248.9 L72.7 245.5 L71.8 239.8 L70.9 239.7 L70.0 240.7 L69.1 237.3 L68.2 230.6 L67.3 226.8 L66.4 226.3 L65.5 224.8 L64.6 220.3 L63.7 217.0 L62.8 221.8 L61.9 214.4 L61.0 211.0 L60.1 213.3 L59.2 209.9 L58.3 207.5 L57.4 206.7 L56.5 201.9 L55.6 203.3 L54.7 201.0 L53.8 199.9 L52.9 197.9 L52.0 199.7 L51.1 197.0 L50.2 195.7 L49.3 195.2 L48.4 196.5 L47.5 193.2 L46.6 192.2 L45.7 193.9 L44.8 194.2 L43.9 197.3 L43.0 194.8 L42.1 194.6 L41.2 194.7 L40.3 196.4 L39.4 197.1 L38.5 197.7 L37.6 199.2 L36.7 195.8 L35.8 196.7 L34.9 200.5 L34.0 200.4 L33.1 200.9 L32.2 202.4 L31.3 206.5 L30.4 207.6 L29.5 207.4 L28.6 208.3 L27.7 213.5 L26.8 214.9 L25.9 217.6 L25.0 218.4 L24.1 219.9 L23.2 221.0 L22.3 226.1 L21.4 225.9 L20.5 228.9 L19.6 234.5 L18.7 233.8 L17.8 236.8 L16.9 242.0 L16.0 242.1 L15.1 244.9 L14.2 249.1 L13.3 251.4 L12.4 255.1 L11.5 257.0 L10.6 262.7 L9.7 264.1 L8.8 268.8 L7.9 271.3 L7.0 274.8 L6.1 278.6 L5.2 286.9 L4.3 285.7 L3.4 288.2 L2.5 291.5Z" stroke="none" fill="#de2048"/></g>
 <!-- C3 marker -->
 <path d="M5 283.200 H20.800 L28.900 291.400 L20.800 299.600 H5Z" fill="#e8405e"/>
 <text x="10.300" y="294.200" font-size="7.600" font-weight="bold" fill="#fff" font-family="Liberation Sans, sans-serif">C 3</text>
 <text x="677.500" y="174.5" text-anchor="end" font-size="8.400" fill="#d8224a" fill-opacity=".55" font-family="Liberation Sans, sans-serif">300 mV</text><text x="677.500" y="214.5" text-anchor="end" font-size="8.400" fill="#d8224a" fill-opacity=".55" font-family="Liberation Sans, sans-serif">200 mV</text><text x="677.500" y="254.0" text-anchor="end" font-size="8.400" fill="#d8224a" fill-opacity=".55" font-family="Liberation Sans, sans-serif">100 mV</text><text x="677.500" y="334.0" text-anchor="end" font-size="8.400" fill="#d8224a" fill-opacity=".55" font-family="Liberation Sans, sans-serif">-100 mV</text><text x="677.500" y="373.5" text-anchor="end" font-size="8.400" fill="#d8224a" fill-opacity=".55" font-family="Liberation Sans, sans-serif">-200 mV</text><text x="677.500" y="413.5" text-anchor="end" font-size="8.400" fill="#d8224a" fill-opacity=".55" font-family="Liberation Sans, sans-serif">-300 mV</text><text x="677.500" y="453.0" text-anchor="end" font-size="8.400" fill="#d8224a" fill-opacity=".55" font-family="Liberation Sans, sans-serif">-400 mV</text><path d="M679.500 285.500 V297.500 L671.500 291.500Z M671.500 291.500 H664" fill="#d8224a" stroke="#d8224a" stroke-width="1.500"/>
 <!-- bracket -->
 <path d="M233.500 78.500 H230.500 V90.500 H233.500 M230.500 84.500 H455.500 M452.500 78.500 H455.500 V90.500 H452.500" stroke="#b4b4b4" stroke-width="1.200" fill="none"/>
 <!-- trigger markers -->
 <path d="M337 76 H346 L341.500 79Z" fill="#f09424"/>
 <path d="M337.600 82 H345.400 V88.800 L341.500 92 L337.600 88.800Z" fill="#201808" stroke="#f09424" stroke-width="1.200"/>
 <path d="M339.500 84.300 H343.500 M341.500 84.300 V88.500" stroke="#f09424" stroke-width="1.200" fill="none"/>
 <path d="M335.600 93.500 H347.400 L341.500 98.500Z" fill="#f09424"/>
 <path d="M335.500 100.200 H347.300 V112.300 H343.800 L341.400 117 L339 112.300 H335.500Z" fill="#000" stroke="#f09424" stroke-width="1.500"/>
 <path d="M338.700 103.500 H344.100 M341.400 103.500 V110" stroke="#f09424" stroke-width="1.800" fill="none"/>
 <!-- corner triangle -->
 <path d="M652 98 H677 V122.500Z" fill="#686868"/>
 <circle cx="671.500" cy="102.700" r="2.600" fill="none" stroke="#b4b4b4" stroke-width="1.300"/>
 <path d="M669.700 104.700 L664.500 109.800" stroke="#b4b4b4" stroke-width="1.500"/>
 <text x="677.500" y="135.500" text-anchor="end" font-size="8.400" stroke="#d8224a" stroke-width=".25" fill="#d8224a" font-family="Liberation Sans, sans-serif">400 mV</text>
</svg>

<div class="a ax" style="left:49.6px">-16 µs</div>
<div class="a ax" style="left:117.8px">-12 µs</div>
<div class="a ax" style="left:185.9px">-8 µs</div>
<div class="a ax" style="left:254.0px">-4 µs</div>
<div class="a ax" style="left:322.0px">0 s</div>
<div class="a ax" style="left:389.0px">4 µs</div>
<div class="a ax" style="left:457.0px">8 µs</div>
<div class="a ax" style="left:524.7px">12 µs</div>
<div class="a ax" style="left:593.0px">16 µs</div>

<!-- AFG panel -->
<div class="a" style="left:371px;top:143px;width:312px;height:338.600px;background:rgba(146,146,146,.88)"></div>
<div class="a" style="left:371px;top:143px;width:312px;height:29.500px;background:#5a5a5a"></div>
<svg class="a" style="left:510px;top:478px" width="34" height="16"><path d="M3 3.500 H29 L16 14Z" fill="#8a8a8a"/></svg>
<div class="a" style="left:379px;top:150.800px;font-size:10.400px;line-height:14px;font-weight:bold;color:#fff">AFG</div>
<svg class="a" style="left:649px;top:148.300px" width="20" height="20"><circle cx="10" cy="10" r="8.400" fill="none" stroke="#d4d4d4" stroke-width="1.300"/><text x="10" y="14.700" text-anchor="middle" font-size="13.500" font-weight="bold" fill="#d4d4d4" font-family="Liberation Sans, sans-serif">?</text></svg>

<div class="a lbl" style="left:379px;top:182px;letter-spacing:.25px">Output</div>
<div class="a" style="left:381px;top:202px;width:186.500px;height:26px;background:linear-gradient(#e2e2e2,#cfcfcf);border-radius:4px;box-shadow:0 1px 2px rgba(0,0,0,.4)"></div>
<div class="a" style="left:442px;top:199px;width:64px;height:31px;background:#1fb6ee;border-radius:2px"></div>
<div class="a lbl" style="left:381px;top:205.500px;width:61px;text-align:center;color:#111">Off</div>
<div class="a lbl" style="left:442px;top:205.500px;width:64px;text-align:center;color:#06263a">Continuous</div>
<div class="a lbl" style="left:506px;top:205.500px;width:62px;text-align:center;color:#111">Burst</div>

<div class="a lbl" style="left:379px;top:240.500px">Waveform Type</div>
<div class="a inp" style="left:381px;top:260px;width:87px;height:26px;border-radius:1px;text-align:left;padding-left:3px;line-height:26px">Sine</div>
<svg class="a" style="left:455px;top:270px" width="10" height="8"><path d="M2.800 2 H8 L5.400 5.800Z" fill="#8a8a8a"/></svg>
<svg class="a" style="left:512px;top:263px" width="30" height="22"><path d="M3 16.500 C5 16.500 5.500 4 8.500 4 C12 4 11.500 16.500 15 16.500 C18.500 16.500 18 4 21.500 4 C23 4 24 8 24.500 10" fill="none" stroke="#4a4a98" stroke-width="1.600"/></svg>

<div class="a lbl" style="left:379px;top:299px">Frequency</div>
<div class="a lbl" style="left:478px;top:299px;letter-spacing:.4px">Amplitude</div>
<div class="a lbl" style="left:577px;top:299px">High Level</div>
<div class="a inp" style="left:381px;top:319px;width:87px;height:25.500px;line-height:24.500px;padding-right:3.300px">100 kHz</div>
<div class="a inp" style="left:481px;top:319px;width:87px;height:25.500px;line-height:24.500px;padding-right:3.300px">500 mVpp</div>
<div class="a inp" style="left:580px;top:319px;width:87px;height:25.500px;line-height:24.500px;padding-right:3.300px">250 mV</div>

<div class="a lbl" style="left:379px;top:357px">Period</div>
<div class="a lbl" style="left:478px;top:357px">Offset</div>
<div class="a lbl" style="left:577px;top:357px">Low Level</div>
<div class="a inp" style="left:381px;top:377px;width:87px;height:25.500px;line-height:24.500px;padding-right:3.300px">10 µs</div>
<div class="a inp" style="left:481px;top:377px;width:87px;height:25.500px;line-height:24.500px;padding-right:3.300px">0 V</div>
<div class="a inp" style="left:580px;top:377px;width:87px;height:25.500px;line-height:24.500px;padding-right:3.300px">-250 mV</div>
<div class="a" style="left:379px;top:415px;width:296px;border-top:1px dotted #909090"></div>

<div class="a lbl" style="left:379px;top:423px">Load Impedance</div>
<div class="a lbl" style="left:478px;top:423px">Add Noise</div>
<div class="a inp" style="left:382px;top:444px;width:43px;height:25px;line-height:25px;text-align:center;border-radius:3px 0 0 3px">50Ω</div>
<div class="a inp" style="left:425px;top:444px;width:44px;height:25px;line-height:25px;text-align:center;background:#1fb6ee;color:#06263a;border-radius:0 3px 3px 0">High Z</div>
<div class="a" style="left:486px;top:448px;width:16px;height:16px;background:#1fb6ee;border-radius:2px"></div>
<svg class="a" style="left:486px;top:448px" width="16" height="16"><path d="M3.500 8 L6.800 11.500 L12.500 4.500" fill="none" stroke="#14243c" stroke-width="2"/></svg>
<div class="a inp" style="left:512px;top:444px;width:57px;height:25px;line-height:25px;padding-right:3px">25%</div>

<!-- handle dots -->
<div class="a" style="left:686.500px;top:278px;width:3px;height:2px;background:#dcdcdc;box-shadow:0 3.800px 0 #dcdcdc,0 7.600px 0 #dcdcdc"></div>

<!-- right panel -->
<div class="a rp"></div>
<div class="a btn" style="left:698px;top:80px;width:44px;height:26px;line-height:23px;letter-spacing:-.3px">Cursors</div>
<div class="a btn" style="left:749px;top:80px;width:45px;height:26px;line-height:23px">Callout</div>
<div class="a btn" style="left:698px;top:113px;width:44px;height:26px;line-height:23px">Measure</div>
<div class="a btn" style="left:749px;top:113px;width:45px;height:26px;line-height:23px;letter-spacing:-.4px">Search</div>
<div class="a" style="left:694px;top:144px;width:105px;border-top:1px solid #444"></div>
<div class="a btn" style="left:698px;top:149px;width:44px;height:26px"></div>
<div class="a btn" style="left:749px;top:149px;width:45px;height:26px;line-height:23px">More...</div>
<svg class="a" style="left:709px;top:152px" width="24" height="22"><g fill="#dcdcdc"><rect x="3.4" y="1.6" width="1.700" height="1.700"/><rect x="3.4" y="5.8" width="1.700" height="1.700"/><rect x="3.4" y="10.0" width="1.700" height="1.700"/><rect x="3.4" y="14.2" width="1.700" height="1.700"/><rect x="8.0" y="1.6" width="1.700" height="1.700"/><rect x="8.0" y="14.2" width="1.700" height="1.700"/><rect x="12.6" y="1.6" width="1.700" height="1.700"/><rect x="12.6" y="14.2" width="1.700" height="1.700"/><rect x="17.2" y="1.6" width="1.700" height="1.700"/><rect x="17.2" y="5.8" width="1.700" height="1.700"/><rect x="17.2" y="10.0" width="1.700" height="1.700"/></g><circle cx="12.200" cy="7.700" r="2.700" fill="#2a2a2a" stroke="#e8e8e8" stroke-width="1.300"/><path d="M10.200 9.700 L6.800 12.600" stroke="#e8e8e8" stroke-width="1.500"/><path d="M15 12 L15 18 L16.600 16.600 L18 19.200 L19.100 18.600 L17.800 16.100 L19.800 15.900Z" fill="#e8e8e8"/></svg>
<div class="a" style="left:694px;top:181px;width:105px;border-top:1px solid #444"></div>

<!-- bottom bar -->
<div class="a badge" style="left:2px;top:493px;width:63px;height:54px"><div class="bh" style="background:#e8405e;height:13px;line-height:13px">Ch 3</div><div class="bb">100 mV/div<br>1 X<br>70 MHz</div></div>

<div class="a btn" style="left:337px;top:494px;width:32px;height:53px"></div>
<div class="a btn" style="left:371px;top:494px;width:31px;height:53px"></div>
<div class="a btn" style="left:405px;top:494px;width:32px;height:53px"></div>
<div class="a btn" style="left:443px;top:494px;width:32px;height:53px;font-size:10.500px;line-height:11.300px;padding-top:11.800px;-webkit-text-stroke:.2px #f0f0f0">Math<br>Ref<br>Bus</div>
<div class="a" style="left:341px;top:499px;width:23px;height:2px;background:#e8d822"></div>
<div class="a" style="left:375px;top:499px;width:23px;height:2px;background:#22b0e8"></div>
<div class="a" style="left:409px;top:499px;width:23px;height:2px;background:#74c02e"></div>
<div class="a" style="left:337px;top:514px;width:32px;text-align:center;font-size:14px;line-height:18px;color:#eee">1</div>
<div class="a" style="left:371px;top:514px;width:31px;text-align:center;font-size:14px;line-height:18px;color:#eee">2</div>
<div class="a" style="left:405px;top:514px;width:32px;text-align:center;font-size:14px;line-height:18px;color:#eee">4</div>
<div class="a" style="left:477px;top:492px;height:57px;border-left:1px solid #1e1e1e"></div>
<div class="a" style="left:483px;top:492px;height:57px;border-left:1px solid #222"></div>

<div class="a badge" style="left:488.500px;top:494px;width:77.500px;height:53px"><div class="bh">AFG<span style="float:right;padding-right:2px">+N</span></div><div class="bb">Sine<br>100 kHz<br>500 mVpp</div></div>
<div class="a badge" style="left:569px;top:494px;width:67px;height:53px"><div class="bh" style="padding-left:6.500px">Horizontal</div><div class="bb">4 µs/div<br><span style="letter-spacing:-.4px">SR: 2.5 GS/s</span><br>RL: 100 kpts</div></div>
<div class="a badge" style="left:639px;top:494px;width:84px;height:53px"><div class="bh" style="font-size:10.300px">Trigger</div><div class="bb" style="padding-left:21px">0 V</div></div>
<div class="a" style="left:690px;top:496px;width:20px;height:10px;background:#e8405e;border-radius:2px;color:#fff;font-size:9px;line-height:10px;text-align:center;font-weight:bold">3</div>
<svg class="a" style="left:641px;top:507px" width="16" height="12"><path d="M1.500 9.500 H4.500 L10 2.500 H13" fill="none" stroke="#5a5ab0" stroke-width="1.200"/></svg>
<div class="a" style="left:727px;top:492px;height:56px;border-left:1px solid #1c1c1c"></div>
<div class="a" style="left:731px;top:496px;width:62px;height:21px;background:#22c022;border-radius:3px;color:#fff;font-size:10px;font-weight:bold;line-height:21px;text-align:center">Triggered</div>
<div class="a badge" style="left:731px;top:521px;width:62px;height:26px;text-align:center;line-height:12.500px;font-size:10.300px">07 Nov 2021<br>5:13:56 PM</div>
</body></html>
